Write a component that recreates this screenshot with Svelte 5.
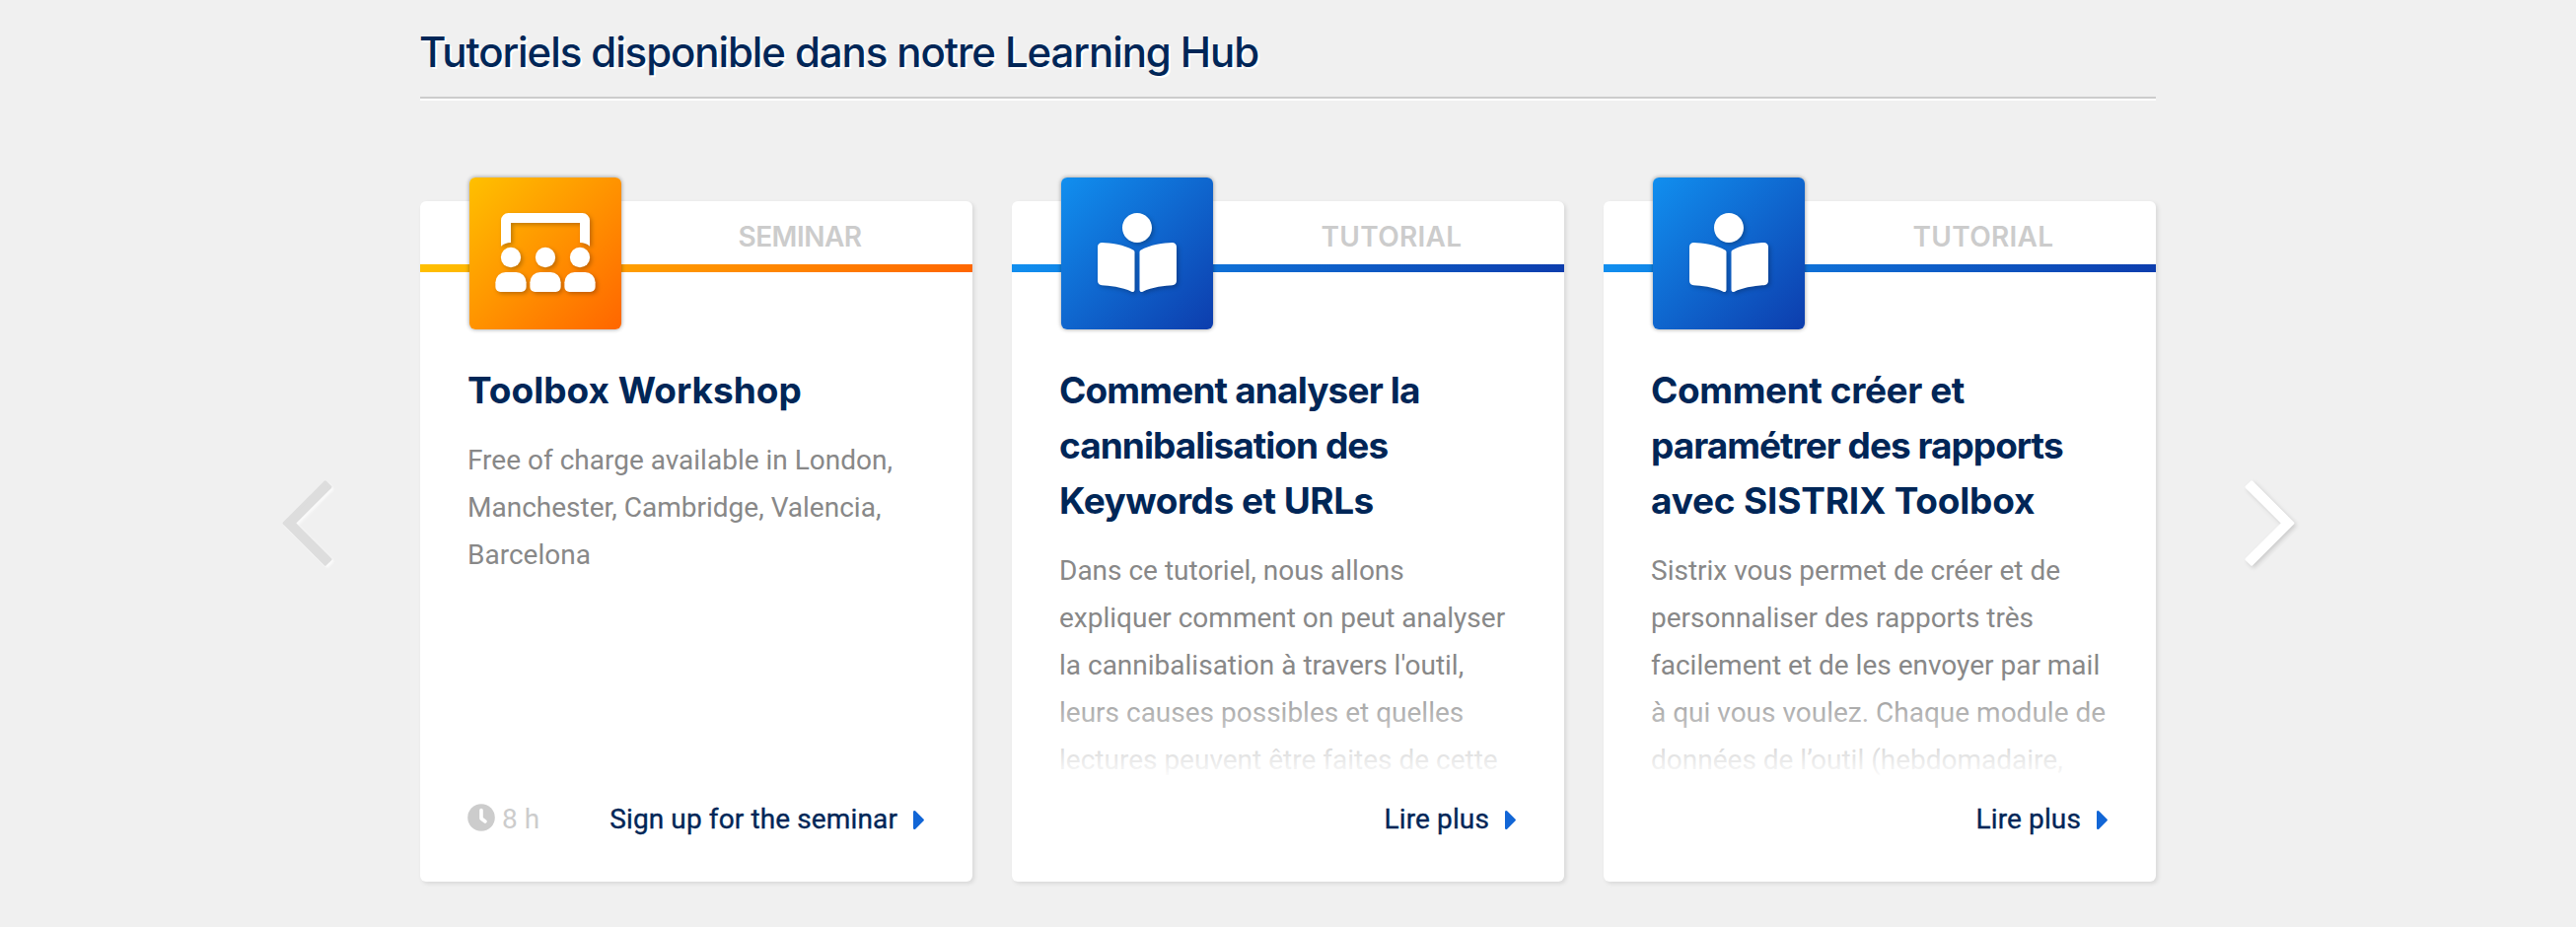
<script>
  const cards = [
    {
      kind: 'seminar',
      label: 'SEMINAR',
      title: [['Toolbox Workshop', 0]],
      text: ['Free of charge available in London,', 'Manchester, Cambridge, Valencia,', 'Barcelona'],
      duration: '8 h',
      link: 'Sign up for the seminar'
    },
    {
      kind: 'tutorial',
      label: 'TUTORIAL',
      title: [['Comment analyser la', -0.85], ['cannibalisation des', -0.95], ['Keywords et URLs', -0.5]],
      text: [
        'Dans ce tutoriel, nous allons',
        'expliquer comment on peut analyser',
        "la cannibalisation à travers l'outil,",
        'leurs causes possibles et quelles',
        'lectures peuvent être faites de cette'
      ],
      link: 'Lire plus'
    },
    {
      kind: 'tutorial',
      label: 'TUTORIAL',
      title: [['Comment créer et', -0.4], ['paramétrer des rapports', -1], ['avec SISTRIX Toolbox', -0.2]],
      text: [
        'Sistrix vous permet de créer et de',
        'personnaliser des rapports très',
        'facilement et de les envoyer par mail',
        'à qui vous voulez. Chaque module de',
        'données de l’outil (hebdomadaire,'
      ],
      link: 'Lire plus'
    }
  ];
</script>

<section class="hub">
  <h2>Tutoriels disponible dans notre Learning Hub</h2>

  <div class="slider">
    <button class="nav prev" aria-label="Précédent">
      <svg width="52" height="90" viewBox="0 0 52 90"><path d="M2.1 45.5 43.85 3.75 48.95 8.85 12.3 45.5 48.95 82.15 43.85 87.25z" /></svg>
    </button>

    <div class="cards">
      {#each cards as card}
        <article class="card {card.kind}">
          <header>
            <div class="tile">
              {#if card.kind === 'seminar'}
                <svg width="102" height="80" viewBox="-6 0 652 512">
                  <path d="M80 0h480a48 48 0 0 1 48 48v168a96 96 0 0 0-64-24V64H96v128a96 96 0 0 0-64 24V48A48 48 0 0 1 80 0z" />
                  {#each [0, 224, 448] as x}
                    <circle cx={x + 96} cy="288" r="65" />
                    <path d="M{x + 62} 384h68a66 66 0 0 1 66 66v30a32 32 0 0 1-32 32h-136a32 32 0 0 1-32-32v-30a66 66 0 0 1 66-66z" />
                  {/each}
                </svg>
              {:else}
                <svg width="80" height="80" viewBox="0 0 512 512">
                  <path d="M352 96c0-53.02-42.98-96-96-96s-96 42.98-96 96 42.98 96 96 96 96-42.98 96-96zM233.59 241.1c-59.33-36.32-155.43-46.3-203.79-49.05C13.55 191.13 0 203.51 0 219.14v222.8c0 14.33 11.59 26.28 26.49 27.05 43.66 2.29 131.99 10.68 193.04 41.43 9.37 4.72 20.48-1.71 20.48-11.87V252.56c-.01-4.67-2.32-8.95-6.42-11.46zm248.61-49.05c-48.35 2.74-144.46 12.73-203.78 49.05-4.1 2.51-6.41 6.96-6.41 11.63v245.79c0 10.19 11.14 16.63 20.54 11.9 61.04-30.72 149.32-39.11 192.97-41.4 14.9-.78 26.49-12.73 26.49-27.06V219.14c-.01-15.63-13.56-28.01-29.81-27.09z" />
                </svg>
              {/if}
            </div>
            <span class="label">{card.label}</span>
          </header>

          <div class="body">
            <h3>
              {#each card.title as [line, spacing]}
                <span style="letter-spacing: {spacing}px">{line}</span>
              {/each}
            </h3>
            <p>
              {#each card.text as line}<span>{line}</span>{/each}
            </p>
          </div>

          <footer>
            {#if card.duration}
              <span class="duration">
                <svg width="28" height="28" viewBox="0 0 28 28">
                  <circle cx="14" cy="14" r="13.8" />
                  <path d="M14 6.6v8.4l4 3" />
                </svg>
                {card.duration}
              </span>
            {/if}
            <a href="#top">
              {card.link}
              <svg width="11" height="19" viewBox="0 0 11 19"><path d="M0 1.2Q0 0 1.4 0 2 .1 2.4.6L10.6 8.8Q11.2 9.5 10.6 10.2L2.4 18.4Q2 19 1.2 19 0 19 0 18z" /></svg>
            </a>
          </footer>
        </article>
      {/each}
    </div>

    <button class="nav next" aria-label="Suivant">
      <svg width="52" height="90" viewBox="0 0 52 90"><path d="M50.9 45.5 9.15 3.75 4.05 8.85 40.7 45.5 4.05 82.15 9.15 87.25z" /></svg>
    </button>
  </div>
</section>

<style>
  :global(body) {
    background: #f0f0f0;
  }

  .hub {
    height: 940px;
    overflow: hidden;
    font-family: Roboto, sans-serif;
    box-sizing: border-box;
    padding-top: 24px;
  }

  h2 {
    width: 1760px;
    height: 74px;
    margin: 0 auto;
    border-bottom: 2px solid #ccc;
    box-shadow: 0 2px 0 #fff;
    font: 500 42px/58px Inter, sans-serif;
    letter-spacing: -1.1px;
    text-indent: -1px;
    color: #002657;
    text-shadow: 2px 2px 0 #fff;
    white-space: nowrap;
  }

  .slider {
    display: flex;
    justify-content: center;
    align-items: center;
    gap: 88px;
    margin-top: 104px;
  }

  .nav {
    width: 52px;
    height: 90px;
    padding: 0;
    border: 0;
    background: none;
    margin-top: -38px;
  }

  .nav svg {
    display: block;
    overflow: visible;
    stroke-width: 3;
    stroke-linejoin: round;
  }

  .prev svg {
    fill: #ddd;
    stroke: #ddd;
    filter: drop-shadow(2px 2px 1px rgba(255, 255, 255, 0.7));
  }

  .next svg {
    fill: #fff;
    stroke: #fff;
    filter: drop-shadow(2px 2px 2px rgba(0, 0, 0, 0.15));
  }

  .cards {
    display: flex;
    gap: 40px;
  }

  .card {
    width: 560px;
    height: 690px;
    display: flex;
    flex-direction: column;
    background: #fff;
    border-radius: 6px;
    box-shadow: 2px 2px 4px rgba(0, 0, 0, 0.1);
  }

  .seminar {
    --from: #ffc000;
    --to: #ff6600;
  }

  .tutorial {
    --from: #118fef;
    --to: #0d3dad;
  }

  header {
    position: relative;
    z-index: 1;
    display: flex;
    height: 72px;
    padding-left: 50px;
    box-sizing: border-box;
    background: linear-gradient(135deg, var(--from), var(--to)) bottom / 100% 8px no-repeat;
  }

  .tile {
    flex: none;
    width: 154px;
    height: 154px;
    margin-top: -24px;
    padding-bottom: 2px;
    box-sizing: border-box;
    display: flex;
    align-items: center;
    justify-content: center;
    border-radius: 6px;
    background: linear-gradient(135deg, var(--from), var(--to));
    box-shadow: 0 0 4px rgba(0, 0, 0, 0.4);
  }

  .tile svg {
    fill: #fff;
    overflow: visible;
    filter: drop-shadow(2px 2px 2px rgba(0, 0, 0, 0.25));
  }

  .label {
    flex: 1;
    margin-left: 6px;
    text-align: center;
    font: 600 28px/72px Inter, sans-serif;
    letter-spacing: -0.5px;
    color: #ccc;
  }

  .tutorial .label {
    letter-spacing: 0.3px;
  }

  .body {
    position: relative;
    height: 514px;
    box-sizing: border-box;
    padding: 92px 48px 0;
    overflow: hidden;
  }

  .tutorial .body::after {
    content: '';
    position: absolute;
    inset: auto 0 0;
    height: 104px;
    background: linear-gradient(rgba(255, 255, 255, 0), #fff);
  }

  h3 {
    margin: 0 0 19px;
    font: 700 37px/56px Inter, sans-serif;
    color: #002657;
  }

  h3 span,
  p span {
    display: block;
    white-space: nowrap;
  }

  p {
    margin: 0;
    font-size: 28px;
    line-height: 48px;
    color: #888;
  }

  footer {
    display: flex;
    align-items: center;
    height: 48px;
    margin-top: 16px;
    padding: 0 48px;
    font-size: 28px;
  }

  .duration {
    display: flex;
    align-items: center;
    gap: 7px;
    color: #ccc;
  }

  .duration svg {
    fill: #ccc;
    margin-top: -2px;
  }

  .duration path {
    fill: none;
    stroke: #fff;
    stroke-width: 3.6;
    stroke-linecap: round;
    stroke-linejoin: round;
  }

  a {
    display: flex;
    align-items: center;
    gap: 16px;
    margin-left: auto;
    padding-right: 1px;
    letter-spacing: 0.12px;
    -webkit-text-stroke: 0.35px;
    color: #002657;
    text-decoration: none;
  }

  a svg {
    fill: #1266d6;
    margin-top: 3px;
  }
</style>
